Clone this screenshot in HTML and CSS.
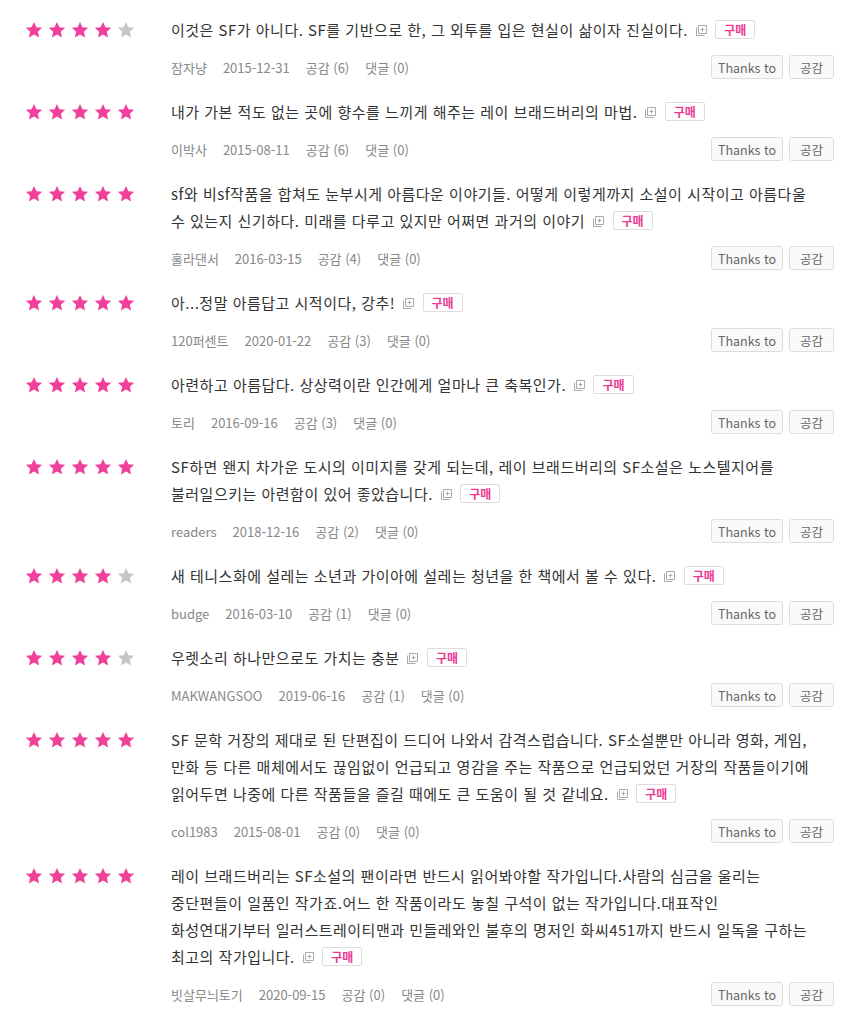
FILE: index.html
```
<!DOCTYPE html>
<html lang="ko">
<head>
<meta charset="utf-8">
<link rel="stylesheet" href="styles.css">
</head>
<body>
<svg width="0" height="0" class="defs">
  <defs>
    <symbol id="star" viewBox="0 0 24 24"><path d="M12 1.2l3.2 7.1 7.7.8-5.8 5.2 1.7 7.6L12 18l-6.8 3.9 1.7-7.6L1.1 9.1l7.7-.8z"/></symbol>
    <symbol id="more" viewBox="0 0 13 13"><path d="M3.5 1.5h8v8h-8z M1.5 3.5v8h8" fill="none" stroke="#aaa" stroke-width="1"/><path d="M7.5 3.5v4M5.5 5.5h4" stroke="#aaa" stroke-width="1"/></symbol>
  </defs>
</svg>
<ul class="reviews">
  <li class="review">
    <div class="stars s4"><svg><use href="#star"/></svg><svg><use href="#star"/></svg><svg><use href="#star"/></svg><svg><use href="#star"/></svg><svg><use href="#star"/></svg></div>
    <div class="body">
      <p class="text">이것은 SF가 아니다. SF를 기반으로 한, 그 외투를 입은 현실이 삶이자 진실이다. <svg class="more"><use href="#more"/></svg> <span class="buy">구매</span></p>
      <div class="meta"><span>잠자냥</span><span>2015-12-31</span><span>공감 (6)</span><span>댓글 (0)</span><span class="btns"><button class="thanks">Thanks to</button><button class="like">공감</button></span></div>
    </div>
  </li>
  <li class="review">
    <div class="stars s5"><svg><use href="#star"/></svg><svg><use href="#star"/></svg><svg><use href="#star"/></svg><svg><use href="#star"/></svg><svg><use href="#star"/></svg></div>
    <div class="body">
      <p class="text">내가 가본 적도 없는 곳에 향수를 느끼게 해주는 레이 브래드버리의 마법. <svg class="more"><use href="#more"/></svg> <span class="buy">구매</span></p>
      <div class="meta"><span>이박사</span><span>2015-08-11</span><span>공감 (6)</span><span>댓글 (0)</span><span class="btns"><button class="thanks">Thanks to</button><button class="like">공감</button></span></div>
    </div>
  </li>
  <li class="review">
    <div class="stars s5"><svg><use href="#star"/></svg><svg><use href="#star"/></svg><svg><use href="#star"/></svg><svg><use href="#star"/></svg><svg><use href="#star"/></svg></div>
    <div class="body">
      <p class="text">sf와 비sf작품을 합쳐도 눈부시게 아름다운 이야기들. 어떻게 이렇게까지 소설이 시작이고 아름다울 수 있는지 신기하다. 미래를 다루고 있지만 어쩌면 과거의 이야기 <svg class="more"><use href="#more"/></svg> <span class="buy">구매</span></p>
      <div class="meta"><span>훌라댄서</span><span>2016-03-15</span><span>공감 (4)</span><span>댓글 (0)</span><span class="btns"><button class="thanks">Thanks to</button><button class="like">공감</button></span></div>
    </div>
  </li>
  <li class="review">
    <div class="stars s5"><svg><use href="#star"/></svg><svg><use href="#star"/></svg><svg><use href="#star"/></svg><svg><use href="#star"/></svg><svg><use href="#star"/></svg></div>
    <div class="body">
      <p class="text">아...정말 아름답고 시적이다, 강추! <svg class="more"><use href="#more"/></svg> <span class="buy">구매</span></p>
      <div class="meta"><span>120퍼센트</span><span>2020-01-22</span><span>공감 (3)</span><span>댓글 (0)</span><span class="btns"><button class="thanks">Thanks to</button><button class="like">공감</button></span></div>
    </div>
  </li>
  <li class="review">
    <div class="stars s5"><svg><use href="#star"/></svg><svg><use href="#star"/></svg><svg><use href="#star"/></svg><svg><use href="#star"/></svg><svg><use href="#star"/></svg></div>
    <div class="body">
      <p class="text">아련하고 아름답다. 상상력이란 인간에게 얼마나 큰 축복인가. <svg class="more"><use href="#more"/></svg> <span class="buy">구매</span></p>
      <div class="meta"><span>토리</span><span>2016-09-16</span><span>공감 (3)</span><span>댓글 (0)</span><span class="btns"><button class="thanks">Thanks to</button><button class="like">공감</button></span></div>
    </div>
  </li>
  <li class="review">
    <div class="stars s5"><svg><use href="#star"/></svg><svg><use href="#star"/></svg><svg><use href="#star"/></svg><svg><use href="#star"/></svg><svg><use href="#star"/></svg></div>
    <div class="body">
      <p class="text">SF하면 왠지 차가운 도시의 이미지를 갖게 되는데, 레이 브래드버리의 SF소설은 노스텔지어를 불러일으키는 아련함이 있어 좋았습니다. <svg class="more"><use href="#more"/></svg> <span class="buy">구매</span></p>
      <div class="meta"><span>readers</span><span>2018-12-16</span><span>공감 (2)</span><span>댓글 (0)</span><span class="btns"><button class="thanks">Thanks to</button><button class="like">공감</button></span></div>
    </div>
  </li>
  <li class="review">
    <div class="stars s4"><svg><use href="#star"/></svg><svg><use href="#star"/></svg><svg><use href="#star"/></svg><svg><use href="#star"/></svg><svg><use href="#star"/></svg></div>
    <div class="body">
      <p class="text">새 테니스화에 설레는 소년과 가이아에 설레는 청년을 한 책에서 볼 수 있다. <svg class="more"><use href="#more"/></svg> <span class="buy">구매</span></p>
      <div class="meta"><span>budge</span><span>2016-03-10</span><span>공감 (1)</span><span>댓글 (0)</span><span class="btns"><button class="thanks">Thanks to</button><button class="like">공감</button></span></div>
    </div>
  </li>
  <li class="review">
    <div class="stars s4"><svg><use href="#star"/></svg><svg><use href="#star"/></svg><svg><use href="#star"/></svg><svg><use href="#star"/></svg><svg><use href="#star"/></svg></div>
    <div class="body">
      <p class="text">우렛소리 하나만으로도 가치는 충분 <svg class="more"><use href="#more"/></svg> <span class="buy">구매</span></p>
      <div class="meta"><span>MAKWANGSOO</span><span>2019-06-16</span><span>공감 (1)</span><span>댓글 (0)</span><span class="btns"><button class="thanks">Thanks to</button><button class="like">공감</button></span></div>
    </div>
  </li>
  <li class="review">
    <div class="stars s5"><svg><use href="#star"/></svg><svg><use href="#star"/></svg><svg><use href="#star"/></svg><svg><use href="#star"/></svg><svg><use href="#star"/></svg></div>
    <div class="body">
      <p class="text">SF 문학 거장의 제대로 된 단편집이 드디어 나와서 감격스럽습니다. SF소설뿐만 아니라 영화, 게임, 만화 등 다른 매체에서도 끊임없이 언급되고 영감을 주는 작품으로 언급되었던 거장의 작품들이기에 읽어두면 나중에 다른 작품들을 즐길 때에도 큰 도움이 될 것 같네요. <svg class="more"><use href="#more"/></svg> <span class="buy">구매</span></p>
      <div class="meta"><span>col1983</span><span>2015-08-01</span><span>공감 (0)</span><span>댓글 (0)</span><span class="btns"><button class="thanks">Thanks to</button><button class="like">공감</button></span></div>
    </div>
  </li>
  <li class="review">
    <div class="stars s5"><svg><use href="#star"/></svg><svg><use href="#star"/></svg><svg><use href="#star"/></svg><svg><use href="#star"/></svg><svg><use href="#star"/></svg></div>
    <div class="body">
      <p class="text">레이 브래드버리는 SF소설의 팬이라면 반드시 읽어봐야할 작가입니다.사람의 심금을 울리는 중단편들이 일품인 작가죠.어느 한 작품이라도 놓칠 구석이 없는 작가입니다.대표작인 화성연대기부터 일러스트레이티맨과 민들레와인 불후의 명저인 화씨451까지 반드시 일독을 구하는 최고의 작가입니다. <svg class="more"><use href="#more"/></svg> <span class="buy">구매</span></p>
      <div class="meta"><span>빗살무늬토기</span><span>2020-09-15</span><span>공감 (0)</span><span>댓글 (0)</span><span class="btns"><button class="thanks">Thanks to</button><button class="like">공감</button></span></div>
    </div>
  </li>
</ul>
</body>
</html>
```
FILE: styles.css
```
html, body {
  margin: 0;
  padding: 0;
  background: #fff;
}
body {
  font-family: "Noto Sans CJK KR", "Noto Sans", sans-serif;
  color: #333;
}
.defs {
  position: absolute;
  width: 0;
  height: 0;
}
.reviews {
  list-style: none;
  margin: 0;
  padding: 0 12px 0 25px;
}
.review {
  display: flex;
  padding: 16px 0 3px;
}
.stars {
  width: 146px;
  flex: none;
  display: flex;
  gap: 5px;
  height: 27px;
  align-items: center;
}
.stars svg {
  width: 18px;
  height: 18px;
  fill: #f0409a;
}
.stars.s4 svg:nth-child(5) {
  fill: #c6c6c6;
}
.body {
  flex: 1;
  min-width: 0;
}
.text {
  margin: 0;
  font-size: 15px;
  letter-spacing: 0.5px;
  line-height: 27px;
  word-break: keep-all;
  padding-right: 15px;
}
.more {
  width: 13px;
  height: 13px;
  vertical-align: -1px;
  margin-left: 2px;
}
.buy {
  display: inline-block;
  font-size: 12px;
  letter-spacing: 0;
  line-height: 17px;
  padding: 0 8px;
  border: 1px solid #ddd;
  border-radius: 2px;
  color: #ea3a93;
  font-weight: bold;
  vertical-align: 1px;
  margin-left: 3px;
}
.meta {
  display: flex;
  align-items: center;
  gap: 16px;
  margin-top: 12px;
  height: 24px;
  font-size: 13px;
  color: #888;
}
.btns {
  margin-left: auto;
  display: flex;
  gap: 6px;
}
.btns button {
  font-family: inherit;
  font-size: 12.5px;
  color: #666;
  background: #fafafa;
  border: 1px solid #ddd;
  border-radius: 3px;
  height: 24px;
  padding: 0 6px;
  cursor: pointer;
}
.btns .like {
  padding: 0 10px;
}
```
